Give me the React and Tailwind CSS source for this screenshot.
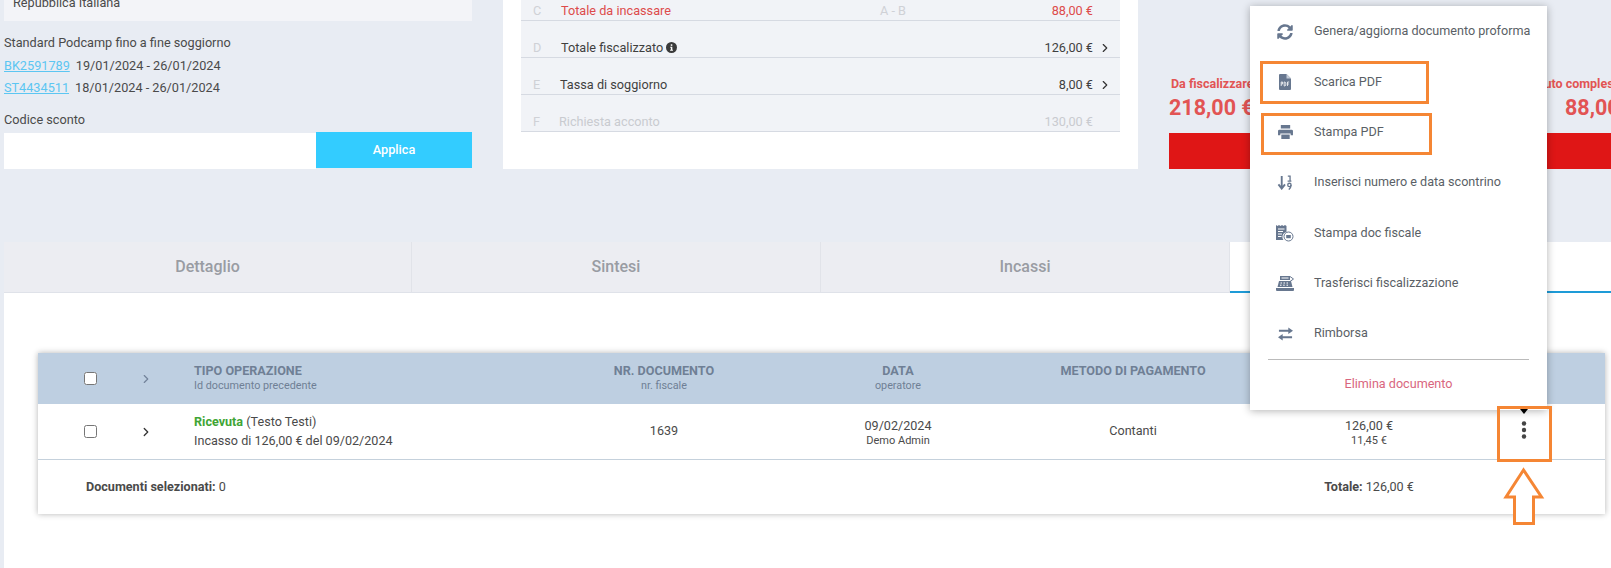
import React from "react";
import { ChevronRight } from "lucide-react";

const rows = [
  { l: "C", t: "Totale da incassare", m: "A - B", v: "88,00 €", red: true, h: "h-[21px]", off: "" },
  { l: "D", t: "Totale fiscalizzato", v: "126,00 €", info: true, chev: true, h: "h-[37px]", off: "" },
  { l: "E", t: "Tassa di soggiorno", v: "8,00 €", chev: true, h: "h-[37px]", off: "-ml-px" },
  { l: "F", t: "Richiesta acconto", v: "130,00 €", mute: true, h: "h-[37px]", off: "-ml-[2px]" },
];

function Refresh() {
  return (
    <svg viewBox="0 0 512 512" className="w-[16px] h-[16px]" fill="#67778f">
      <path d="M370.7 133.3C339.5 104 298.9 88 255.8 88c-77.5.1-144.3 53.2-162.8 126.9-1.3 5.4-6.1 9.2-11.7 9.2H24.1c-7.5 0-13.2-6.8-11.8-14.2C33.9 94.9 134.8 8 256 8c66.4 0 126.8 26.1 171.3 68.7L463 41C478.1 25.9 504 36.6 504 57.9V192c0 13.3-10.7 24-24 24H345.9c-21.4 0-32.1-25.9-17-41l41.8-41.7zM32 296h134.1c21.4 0 32.1 25.9 17 41l-41.8 41.8c31.3 29.3 71.8 45.3 114.9 45.2 77.4-.1 144.3-53.1 162.8-126.8 1.3-5.4 6.1-9.2 11.7-9.2h57.3c7.5 0 13.2 6.8 11.8 14.2C478.1 417.1 377.2 504 256 504c-66.4 0-126.8-26.1-171.3-68.7L49 471C33.9 486.1 8 475.4 8 454.1V320c0-13.3 10.7-24 24-24z" />
    </svg>
  );
}
function PdfIcon() {
  return (
    <svg viewBox="0 0 12 16" className="w-[12px] h-[16px]">
      <path d="M1 0h6.500L12 4.500V15a1 1 0 0 1-1 1H1a1 1 0 0 1-1-1V1a1 1 0 0 1 1-1z" fill="#67778f" />
      <path d="M7.500 0v4.500H12z" fill="#c4ccd8" />
      <path d="M2.200 8v4M2.200 8h1.400v2H2.200M5.200 8v4h.7q1-.2 1-2t-1-2zM8.500 12V8h1.700M8.500 10h1.400" stroke="#fff" strokeWidth=".8" fill="none" />
    </svg>
  );
}
function PrintIcon() {
  return (
    <svg viewBox="0 0 16 15" className="w-[15px] h-[14px]" fill="#67778f">
      <path d="M3 0h10v3.800H3zM1.500 5h13A1.500 1.500 0 0 1 16 6.500V11h-2.500V9h-11v2H0V6.500A1.500 1.500 0 0 1 1.500 5z" />
      <path d="M3.500 10.200h9V15h-9z" />
    </svg>
  );
}
function SortIcon() {
  return (
    <svg viewBox="0 0 16 16" className="w-[16px] h-[15px]" fill="none" stroke="#67778f">
      <path d="M4.500 1v13M1 10l3.500 4.500L8 10" strokeWidth="2" />
      <path d="M11 1.200h2.400v5.300M10.800 6.500h4" strokeWidth="1.400" />
      <circle cx="12.700" cy="10.600" r="1.800" strokeWidth="1.400" />
      <path d="M14.400 10.700c0 2.200-.8 4-2.400 4.800" strokeWidth="1.400" />
    </svg>
  );
}
function DocFiscal() {
  return (
    <svg viewBox="0 0 18 17" className="w-[18px] h-[17px]">
      <path d="M0 0l1.500 1L3 0l1.500 1L6 0l1.500 1L9 0l1.500 1V7a5 5 0 0 0-3 8H0z" fill="#67778f" />
      <path d="M2 4h6.500M2 6.500h5M2 9h4M2 11.500h3.500" stroke="#fff" strokeWidth="1" />
      <circle cx="12.500" cy="11.500" r="4.500" fill="#fff" stroke="#67778f" />
      <rect x="10.200" y="10" width="4.600" height="3.200" fill="#67778f" />
    </svg>
  );
}
function RegisterIcon() {
  return (
    <svg viewBox="0 0 18 15" className="w-[18px] h-[15px]">
      <path d="M4 0h10v4H4z" fill="#67778f" />
      <path d="M5.500 2h7" stroke="#fff" />
      <path d="M3 5h12l1.500 6H1.500z" fill="#67778f" />
      <path d="M4.500 7h1.500M7.500 7H9M10.500 7H12M4 9.200h1.500M7.200 9.200h1.500M10.500 9.200H12" stroke="#fff" />
      <path d="M0 12h18v2a1 1 0 0 1-1 1H1a1 1 0 0 1-1-1z" fill="#67778f" />
      <path d="M14 .5l3.500 2.500L14 5.500" stroke="#67778f" fill="none" />
    </svg>
  );
}
function Exchange() {
  return (
    <svg viewBox="0 0 16 14" className="w-[15px] h-[14px]" fill="#67778f">
      <path d="M11 0l5 3.500L11 7V4.600H1V2.400h10zM5 7v2.400h10v2.200H5V14L0 10.500z" />
    </svg>
  );
}
function InfoDot() {
  return (
    <svg viewBox="0 0 12 12" className="w-[11px] h-[11px]">
      <circle cx="6" cy="6" r="6" fill="#3a3a3a" />
      <rect x="5.200" y="2.500" width="1.700" height="1.700" fill="#fff" />
      <path d="M4.600 5.200h2.300v3.300h.7v1H4.500v-1h.8V6.200h-.7z" fill="#fff" />
    </svg>
  );
}

const menu = [
  [Refresh, "Genera/aggiorna documento proforma"],
  [PdfIcon, "Scarica PDF"],
  [PrintIcon, "Stampa PDF"],
  [SortIcon, "Inserisci numero e data scontrino"],
  [DocFiscal, "Stampa doc fiscale"],
  [RegisterIcon, "Trasferisci fiscalizzazione"],
  [Exchange, "Rimborsa"],
];

const grid = "grid grid-cols-[90px_66px_370px_200px_268px_202px_270px_40px_1fr] items-center";

function Box() {
  return <input type="checkbox" className="w-[13px] h-[13px] m-0 ml-[46px]" readOnly />;
}

export default function App() {
  return (
    <div className="relative w-[1611px] h-[568px] overflow-hidden flex flex-col bg-[#e8ecf3] text-[#4a4a4a] font-['Roboto',sans-serif] text-[12.7px]">
      <div className="flex h-[242px] shrink-0 pl-1">
        <div className="w-[468px] shrink-0">
          <div className="h-[21px] bg-[#f3f4f8] px-[9px] leading-[6px] overflow-hidden">Repubblica Italiana</div>
          <div className="mt-[13px] leading-[18px]">Standard Podcamp fino a fine soggiorno</div>
          <div className="mt-[5px] leading-[18px]">
            <span className="text-[#5cc6f2] underline">BK2591789</span>
            <span className="ml-[6px]">19/01/2024 - 26/01/2024</span>
          </div>
          <div className="mt-[4px] leading-[18px]">
            <span className="text-[#5cc6f2] underline">ST4434511</span>
            <span className="ml-[6px]">18/01/2024 - 26/01/2024</span>
          </div>
          <div className="mt-[14px] leading-[18px]">Codice sconto</div>
          <div className="mt-[3px] flex h-[37px]">
            <div className="h-[36px] w-[312px] bg-white self-end" />
            <div className="h-[36px] flex-1 self-start bg-[#33ccff] text-white font-medium flex items-center justify-center">Applica</div>
          </div>
        </div>
        <div className="ml-[31px] h-[169px] w-[635px] shrink-0 bg-white px-[18px]">
          {rows.map((r) => (
            <div key={r.l} className={`flex items-end bg-[#f1f3f7] border-b border-[#d6dae2] leading-[19px] ${r.h}`}>
              <span className="w-[40px] pl-[12px] text-[#cfd1d6] shrink-0">{r.l}</span>
              <span
                className={`w-[319px] shrink-0 flex items-center gap-[3px] ${r.off} ${r.red ? "text-[#dd4b4b]" : r.mute ? "text-[#c9cbd0]" : "text-[#3f3f3f]"}`}
              >
                {r.t}
                {r.info && <InfoDot />}
              </span>
              {r.m && <span className="text-[#cfd1d6]">{r.m}</span>}
              <span className={`ml-auto ${r.red ? "text-[#dd4b4b]" : r.mute ? "text-[#c9cbd0]" : "text-[#3f3f3f]"}`}>{r.v}</span>
              <span className="w-[27px] h-[19px] shrink-0 pl-[5px] flex items-center">
                {r.chev && <ChevronRight size={14} strokeWidth={2} className="text-[#333]" />}
              </span>
            </div>
          ))}
        </div>
        <div className="ml-[31px] flex-1 min-w-0 overflow-hidden pt-[76px] whitespace-nowrap">
          <div className="flex h-[57px] text-[#e25454] font-bold">
            <div className="w-[300px] shrink-0">
              <div className="text-[12.5px] leading-[16px] pl-[2px]">Da fiscalizzare</div>
              <div className="text-[21.5px] leading-[26px] mt-[3px]">218,00 €</div>
            </div>
            <div className="flex-1">
              <div className="text-[12.5px] leading-[16px] ml-[54px]">Dovuto complessivo</div>
              <div className="text-[21.5px] leading-[26px] mt-[3px] ml-[96px]">88,00 €</div>
            </div>
          </div>
          <div className="h-[36px] bg-[#df1616]" />
        </div>
      </div>

      <div className="flex-1 ml-1 bg-white flex flex-col">
        <div className="flex h-[51px] shrink-0 border-b border-[#dfe2e9] text-[16px] font-medium text-[#999ca3]">
          <div className="w-[408px] flex items-center justify-center bg-[#ecedf2] border-r border-[#e1e3e9]">Dettaglio</div>
          <div className="w-[409px] flex items-center justify-center bg-[#ecedf2] border-r border-[#e1e3e9]">Sintesi</div>
          <div className="w-[409px] flex items-center justify-center bg-[#ecedf2] border-r border-[#e1e3e9]">Incassi</div>
          <div className="flex-1 bg-white border-b-2 border-[#1e9bd7] -mb-px" />
        </div>

        <div className="pt-[60px] pl-[34px] text-[12.6px]">
          <div className="w-[1567px] bg-white shadow-[0_0_6px_rgba(0,0,0,0.3)]">
            <div className={`${grid} h-[51px] bg-[#becfe1] text-[#6f7f95]`}>
              <Box />
              <div className="pl-[11px]"><ChevronRight size={14} className="text-[#73839a]" /></div>
              <div className="pb-[2px]">
                <div className="font-bold leading-[17px]">TIPO OPERAZIONE</div>
                <div className="text-[10.8px] leading-[14px]">Id documento precedente</div>
              </div>
              <div className="text-center pb-[2px]">
                <div className="font-bold leading-[17px]">NR. DOCUMENTO</div>
                <div className="text-[10.8px] leading-[14px]">nr. fiscale</div>
              </div>
              <div className="text-center pb-[2px]">
                <div className="font-bold leading-[17px]">DATA</div>
                <div className="text-[10.8px] leading-[14px]">operatore</div>
              </div>
              <div className="text-center self-start pt-[9px] font-bold leading-[17px]">METODO DI PAGAMENTO</div>
            </div>
            <div className={`${grid} h-[56px] border-b border-[#c5d1dc]`}>
              <Box />
              <div className="pl-[11px]"><ChevronRight size={14} strokeWidth={2.2} className="text-[#333]" /></div>
              <div>
                <div className="leading-[18px]"><span className="font-bold text-[#3fa535]">Ricevuta</span> (Testo Testi)</div>
                <div className="leading-[19px]">Incasso di 126,00 € del 09/02/2024</div>
              </div>
              <div className="text-center">1639</div>
              <div className="text-center pt-[3px]">
                <div className="leading-[16px]">09/02/2024</div>
                <div className="text-[11px] leading-[14px]">Demo Admin</div>
              </div>
              <div className="text-center">Contanti</div>
              <div className="text-center pt-[3px]">
                <div className="leading-[16px]">126,00 €</div>
                <div className="text-[11px] leading-[14px]">11,45 €</div>
              </div>
              <div className="flex justify-center pb-[4px]">
                <svg viewBox="0 0 6 18" className="w-[6px] h-[18px]" fill="#444">
                  <circle cx="3" cy="2.500" r="2.200" />
                  <circle cx="3" cy="9" r="2.200" />
                  <circle cx="3" cy="15.500" r="2.200" />
                </svg>
              </div>
            </div>
            <div className={`${grid} h-[54px]`}>
              <div className="col-span-6 pl-[48px]"><b className="font-bold">Documenti selezionati:</b> 0</div>
              <div className="text-center"><b className="font-bold">Totale:</b> 126,00 €</div>
            </div>
          </div>
        </div>
      </div>

      <div className="absolute left-[1250px] top-[6px] w-[297px] h-[404px] bg-white shadow-[0_1px_8px_rgba(0,0,0,0.3)] text-[#5a5f66] text-[12.6px]">
        {menu.map(([Icon, label]) => (
          <div key={label} className="flex h-[50.300px] first:h-[51px] items-center">
            <span className="ml-[25px] mr-[19px] w-[20px] flex justify-center"><Icon /></span>
            {label}
          </div>
        ))}
        <div className="mx-[18px] border-t border-[#bbbbbb]" />
        <div className="h-[50px] flex items-center justify-center text-[#d9667e]">Elimina documento</div>
      </div>

      <div className="absolute left-[1520px] top-[409px] w-0 h-0 border-x-[4px] border-x-transparent border-t-[5px] border-t-black" />
      <div className="absolute left-[1260px] top-[61px] w-[169px] h-[43px] border-[3px] border-[#f58634]" />
      <div className="absolute left-[1261px] top-[113px] w-[171px] h-[42px] border-[3px] border-[#f58634]" />
      <div className="absolute left-[1497px] top-[406px] w-[55px] h-[56px] border-[3px] border-[#f58634]" />
      <svg className="absolute left-[1498px] top-[464px] w-[50px] h-[64px]" viewBox="0 0 50 64" fill="#fff" stroke="#f58634" strokeWidth="3">
        <polygon points="25.5,6 8,33 16.5,33 16.5,59.5 35.5,59.5 35.5,33 43.5,33" />
      </svg>
    </div>
  );
}
